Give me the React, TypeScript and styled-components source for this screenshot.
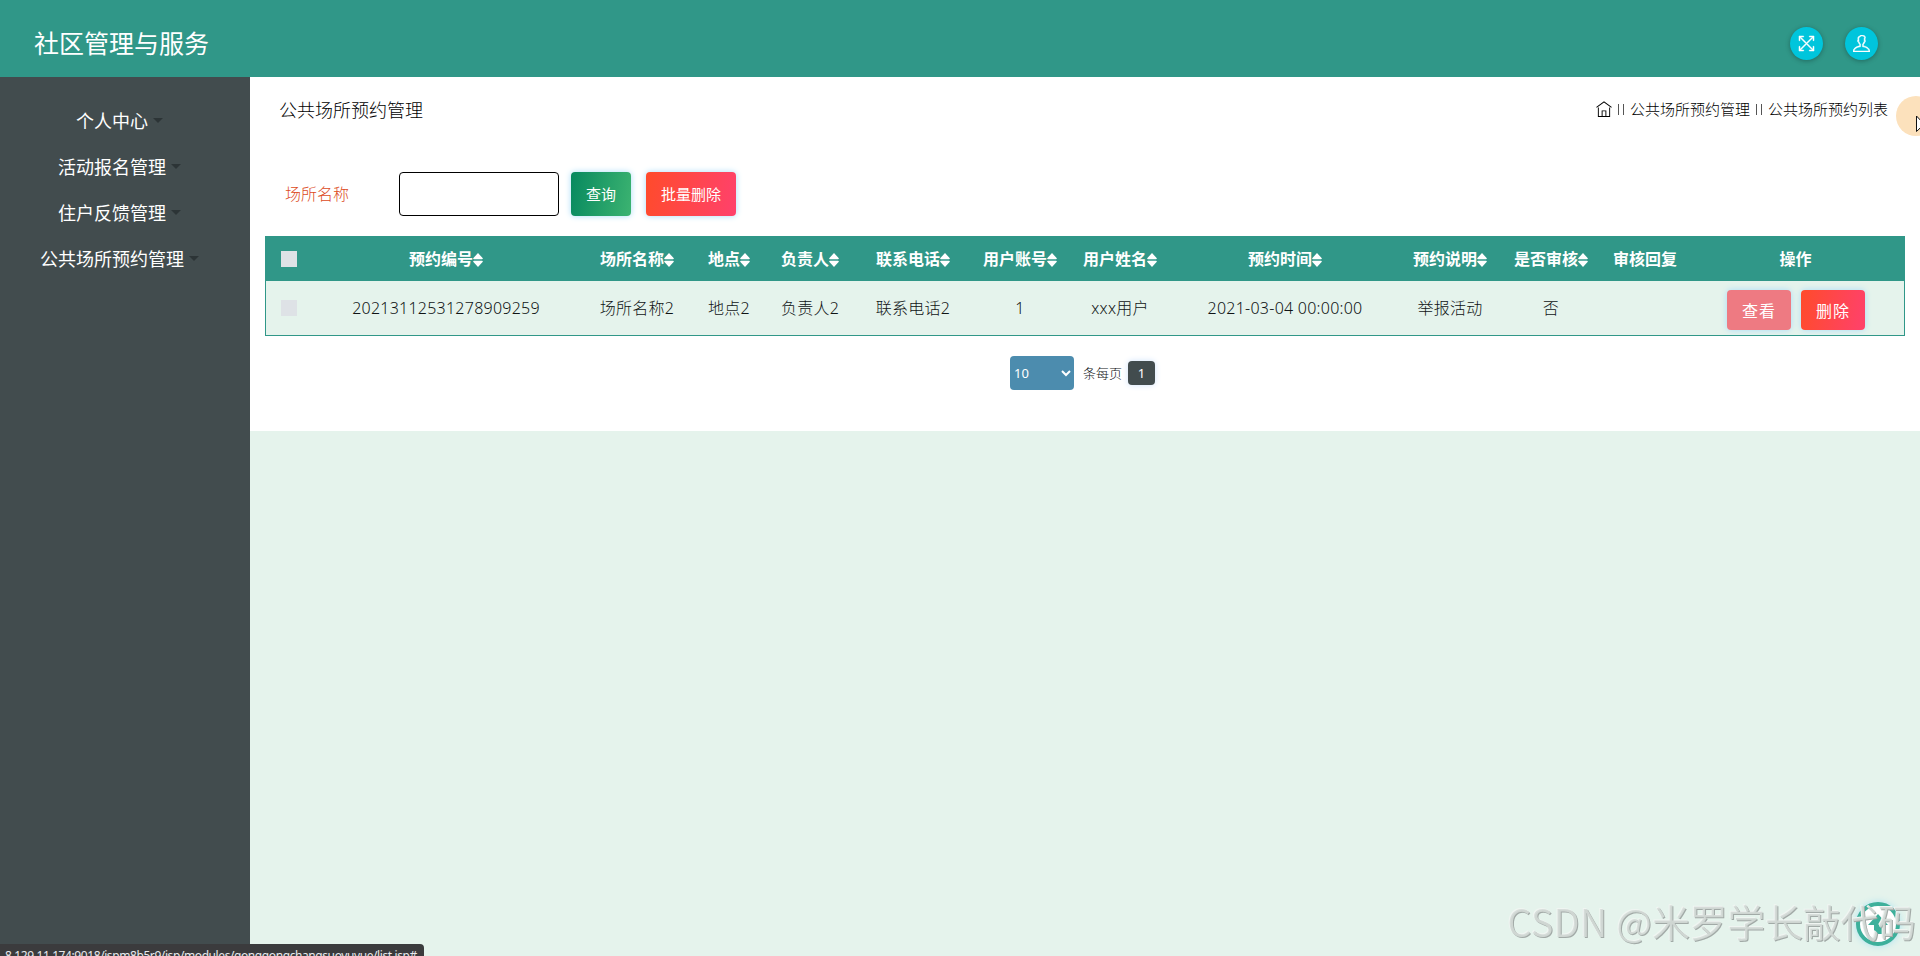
import React from 'react';
import styled, { createGlobalStyle } from 'styled-components';
import { TfiFullscreen, TfiHome, TfiUser } from 'react-icons/tfi';

const GlobalStyle = createGlobalStyle`
  *, *::before, *::after { box-sizing: border-box; }
  html, body { margin: 0; height: 100%; overflow: hidden; }
  body {
    background: #e5f3ec;
    color: #101315;
    font-family: 'Noto Sans', 'Noto Sans CJK SC', sans-serif;
    font-size: 16px;
    font-weight: 300;
  }
  button, input, select { font-family: inherit; }
`;

const Page = styled.div`
  display: flex;
  flex-direction: column;
  height: 100vh;
`;

const Header = styled.header`
  display: flex;
  flex: none;
  align-items: center;
  justify-content: space-between;
  height: 77px;
  padding: 9px 42px 0 34px;
  background: #309788;
`;

const Brand = styled.h1`
  margin: 0;
  color: #fff;
  font-size: 25px;
  font-weight: 400;
  line-height: 36px;
`;

const HeaderActions = styled.div`
  display: flex;
  gap: 22px;
`;

const RoundButton = styled.button`
  display: flex;
  align-items: center;
  justify-content: center;
  width: 33px;
  height: 33px;
  padding: 0;
  border: 0;
  border-radius: 50%;
  background: #00c5dc;
  color: #fff;
  font-size: 17px;
  box-shadow: 0 1px 5px rgba(0, 0, 0, 0.3);

  svg { stroke: currentColor; stroke-width: 0.5; }
`;

const Body = styled.div`
  display: flex;
  flex: 1;
  min-height: 0;
`;

const Sidebar = styled.nav`
  display: flex;
  flex: none;
  flex-direction: column;
  width: 250px;
  padding: 21px 11px 0 0;
  background: #424c4e;
`;

const MenuItem = styled.a`
  display: flex;
  align-items: center;
  justify-content: center;
  gap: 5px;
  height: 46px;
  color: #fff;
  font-size: 18px;
  font-weight: 400;
  line-height: 27px;

  &::after {
    content: '';
    margin-top: -1px;
    border: 5px solid transparent;
    border-top-color: #2c3436;
    border-bottom: 0;
  }
`;

const Main = styled.main`
  flex: 1;
  min-width: 0;
`;

const Panel = styled.section`
  height: 354px;
  padding: 0 15px;
  background: #fff;
`;

const TitleBar = styled.div`
  display: flex;
  align-items: center;
  justify-content: space-between;
  height: 95px;
  padding: 0 17px 31px 14px;
`;

const Title = styled.h2`
  margin: 0;
  color: #000;
  font-size: 18px;
  font-weight: 300;
`;

const Breadcrumb = styled.div`
  display: flex;
  align-items: center;
  color: #000;
  font-size: 15px;
  line-height: 22px;

  svg { font-size: 16px; }
`;

const Divider = styled.span`
  width: 6px;
  height: 11px;
  margin: 0 6px;
  border: solid #555;
  border-width: 0 1px;
`;

const SearchForm = styled.div`
  display: flex;
  align-items: center;
  height: 44px;
  padding-left: 20px;
`;

const Label = styled.label`
  width: 114px;
  padding-bottom: 2px;
  color: #dc4a1c;
  font-size: 16px;
`;

const TextInput = styled.input`
  width: 160px;
  height: 44px;
  margin-right: 12px;
  border: 1px solid #000;
  border-radius: 4px;
  background: #fff;
`;

const fills = {
  search: 'linear-gradient(100deg, #07895f, #3cb371)',
  remove: 'linear-gradient(100deg, #ff4b2b, #ff416c)',
  view: '#ee7a82',
};

const Button = styled.button<{ $fill: keyof typeof fills; $small?: boolean }>`
  height: ${p => (p.$small ? 40 : 44)}px;
  padding: ${p => (p.$small ? '0 0 1px 1px' : '0 15px 1px')};
  ${p => (p.$small ? 'width: 64px; letter-spacing: 1px;' : '')}
  border: 0;
  border-radius: 4px;
  background: ${p => fills[p.$fill]};
  color: #fff;
  font-size: ${p => (p.$small ? 16 : 15)}px;
  white-space: nowrap;
  box-shadow: 0 0 6px #a9dcf8;
`;

const SearchButtons = styled.div`
  display: flex;
  gap: 15px;
`;

const RowButtons = styled.div`
  display: flex;
  justify-content: center;
  gap: 10px;
  padding-top: 4px;
`;

const Table = styled.table`
  width: 1640px;
  height: 100px;
  margin-top: 20px;
  border: 1px solid #309788;
  border-spacing: 0;
  table-layout: fixed;
  background: #e5f3ec;
`;

const HeadCell = styled.th`
  height: 44px;
  padding: 0;
  background: #309788;
  color: #fff;
  font-weight: 700;
  line-height: 24px;
  white-space: nowrap;

  svg { vertical-align: -2px; }
`;

const Cell = styled.td`
  height: 54px;
  padding: 0;
  line-height: 24px;
  letter-spacing: 0.25px;
  text-align: center;
  white-space: nowrap;
`;

const CheckBox = styled.span`
  display: block;
  width: 16px;
  height: 16px;
  margin-left: 15px;
  background: #dee2e6;
`;

const Pager = styled.div`
  display: flex;
  align-items: center;
  height: 34px;
  margin: 20px 0 0 745px;
  font-size: 13px;
`;

const PageSize = styled.select`
  width: 64px;
  height: 34px;
  margin-right: 9px;
  padding: 0;
  border: 0;
  border-radius: 4px;
  background: #4c8cae;
  color: #fff;
  font-size: 13px;
`;

const PagerText = styled.span`
  padding-bottom: 2px;
`;

const PageNumber = styled.span`
  width: 27px;
  height: 24px;
  margin-left: 6px;
  border-radius: 4px;
  background: #424c4e;
  color: #fff;
  font-weight: 400;
  line-height: 24px;
  text-align: center;
  box-shadow: 0 0 6px #cfe2fb;
`;

const BackToTop = styled.button`
  position: fixed;
  right: 20px;
  bottom: 10px;
  display: flex;
  align-items: center;
  justify-content: center;
  width: 44px;
  height: 44px;
  padding: 0;
  border: 4px solid #3db09b;
  border-radius: 50%;
  background: #fff;
  box-shadow: 0 0 7px #a9e2f0;
`;

const Watermark = styled.div`
  position: fixed;
  right: 4px;
  bottom: 7px;
  color: rgba(212, 218, 215, 0.9);
  font-family: 'Noto Sans CJK SC', sans-serif;
  font-size: 37.7px;
  font-weight: 350;
  line-height: 56px;
  white-space: nowrap;
  text-shadow: 1px 1px 0 #a2aaa7, -1px -1px 0 #f0f5f2;
`;

const WatermarkSite = styled.span`
  letter-spacing: 0.5px;
`;

const StatusBar = styled.div`
  position: fixed;
  left: 0;
  bottom: 0;
  width: 424px;
  height: 12px;
  padding: 4px 0 0 5px;
  overflow: hidden;
  border-top-right-radius: 4px;
  background: #3b3b3d;
  color: #e8eaed;
  font-size: 12px;
  font-weight: 400;
  letter-spacing: -0.41px;
  line-height: 16px;
  white-space: nowrap;
`;

const PointerHalo = styled.div`
  position: fixed;
  top: 96px;
  left: 1896px;
  width: 40px;
  height: 40px;
  border-radius: 50%;
  background: #fce1bc;

  svg { position: absolute; top: 19px; left: 20px; }
`;

const SortIcon = () => (
  <svg width="10" height="14" viewBox="0 0 10 14" fill="currentColor">
    <path d="M5 0 9.8 5.2Q10 6.2 9 6.2H1Q0 6.2 .2 5.2zM5 14 .2 8.8Q0 7.8 1 7.8h8q1 0 .8 1z" />
  </svg>
);

const menu = ['个人中心', '活动报名管理', '住户反馈管理', '公共场所预约管理'];

const columns = [
  { name: '预约编号', width: 266, value: '20213112531278909259', sortable: true },
  { name: '场所名称', width: 116, value: '场所名称2', sortable: true },
  { name: '地点', width: 68, value: '地点2', sortable: true },
  { name: '负责人', width: 94, value: '负责人2', sortable: true },
  { name: '联系电话', width: 112, value: '联系电话2', sortable: true },
  { name: '用户账号', width: 102, value: '1', sortable: true },
  { name: '用户姓名', width: 98, value: 'xxx用户', sortable: true },
  { name: '预约时间', width: 232, value: '2021-03-04 00:00:00', sortable: true },
  { name: '预约说明', width: 98, value: '举报活动', sortable: true },
  { name: '是否审核', width: 104, value: '否', sortable: true },
  { name: '审核回复', width: 84, value: '', sortable: false },
];

export default function App() {
  return (
    <Page>
      <GlobalStyle />
      <Header>
        <Brand>社区管理与服务</Brand>
        <HeaderActions>
          <RoundButton><TfiFullscreen /></RoundButton>
          <RoundButton><TfiUser /></RoundButton>
        </HeaderActions>
      </Header>
      <Body>
        <Sidebar>
          {menu.map(item => <MenuItem key={item}>{item}</MenuItem>)}
        </Sidebar>
        <Main>
          <Panel>
            <TitleBar>
              <Title>公共场所预约管理</Title>
              <Breadcrumb>
                <TfiHome />
                <Divider />
                <span>公共场所预约管理</span>
                <Divider />
                <span>公共场所预约列表</span>
              </Breadcrumb>
            </TitleBar>
            <SearchForm>
              <Label htmlFor="place">场所名称</Label>
              <TextInput id="place" />
              <SearchButtons>
                <Button $fill="search">查询</Button>
                <Button $fill="remove">批量删除</Button>
              </SearchButtons>
            </SearchForm>
            <Table>
              <colgroup>
                <col width={47} />
                {columns.map(c => <col key={c.name} width={c.width} />)}
                <col width={217} />
              </colgroup>
              <thead>
                <tr>
                  <HeadCell><CheckBox /></HeadCell>
                  {columns.map(c => (
                    <HeadCell key={c.name}>{c.name}{c.sortable && <SortIcon />}</HeadCell>
                  ))}
                  <HeadCell>操作</HeadCell>
                </tr>
              </thead>
              <tbody>
                <tr>
                  <Cell><CheckBox /></Cell>
                  {columns.map(c => <Cell key={c.name}>{c.value}</Cell>)}
                  <Cell>
                    <RowButtons>
                      <Button $fill="view" $small>查看</Button>
                      <Button $fill="remove" $small>删除</Button>
                    </RowButtons>
                  </Cell>
                </tr>
              </tbody>
            </Table>
            <Pager>
              <PageSize defaultValue="10"><option>10</option></PageSize>
              <PagerText>条每页</PagerText>
              <PageNumber>1</PageNumber>
            </Pager>
          </Panel>
        </Main>
      </Body>
      <BackToTop>
        <svg width="22" height="22" viewBox="0 0 22 22" fill="#3db09b">
          <path d="M11 1 21 12h-6v9H7v-9H1z" />
        </svg>
      </BackToTop>
      <Watermark><WatermarkSite>CSDN @</WatermarkSite>米罗学长敲代码</Watermark>
      <StatusBar>8.129.11.174:9018/jspm8b5r9/jsp/modules/gonggongchangsuoyuyue/list.jsp#</StatusBar>
      <PointerHalo>
        <svg width="12" height="19" viewBox="0 0 12 19" fill="#fff" stroke="#111">
          <path d="M.5 1v15.5l3.7-3.5 2.4 5.2 2.2-1-2.3-5H11z" />
        </svg>
      </PointerHalo>
    </Page>
  );
}
